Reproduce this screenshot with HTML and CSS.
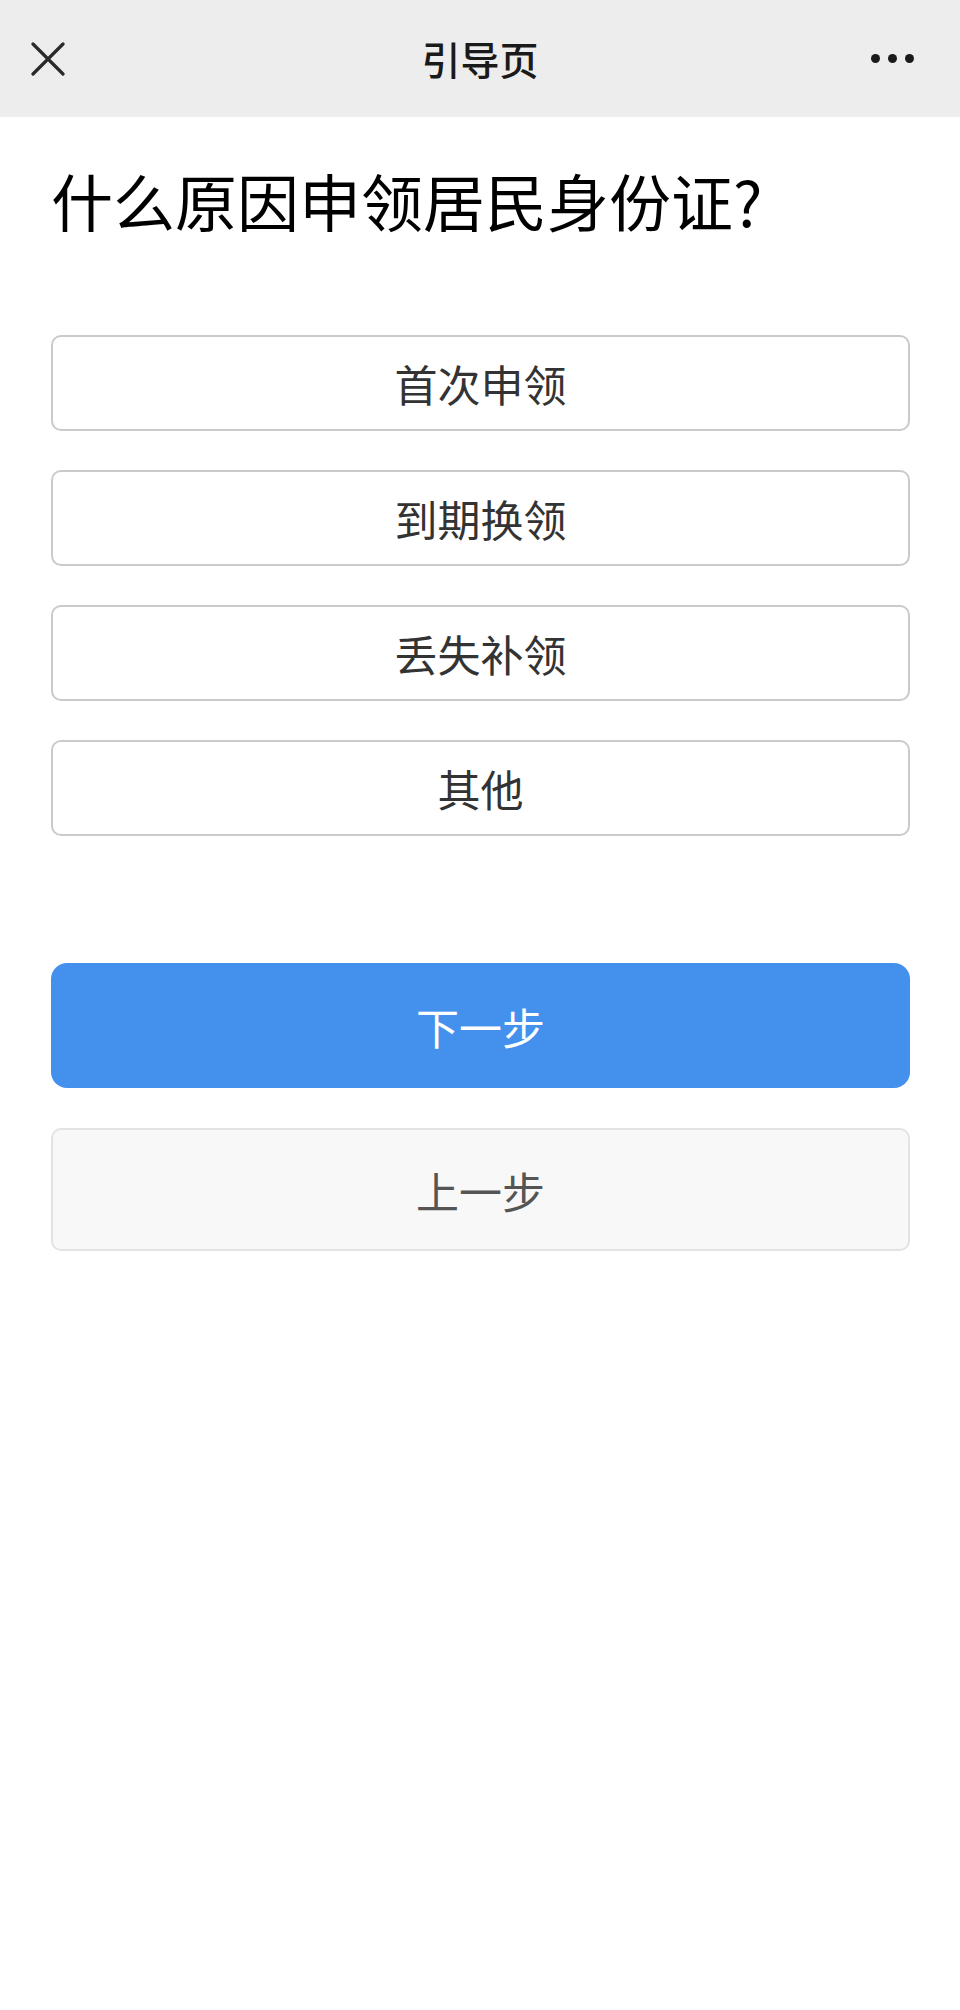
FILE: index.html
```html
<!DOCTYPE html>
<html lang="zh-CN">
<head>
    <meta charset="UTF-8">
    <meta name="viewport" content="width=device-width, initial-scale=1.0">
    <title>引导页</title>
    <link rel="stylesheet" href="styles.css">
</head>
<body>

<header class="topbar">
    <div class="topbar-left">
        <svg class="close-icon" width="34" height="34" viewBox="0 0 34 34">
            <path d="M2 2 L32 32 M32 2 L2 32" stroke="#2a2a2a" stroke-width="3.2" stroke-linecap="round" fill="none"/>
        </svg>
    </div>
    <h1 class="topbar-title">引导页</h1>
    <div class="topbar-right">
        <span class="dot"></span>
        <span class="dot"></span>
        <span class="dot"></span>
    </div>
</header>

<div class="container">
    <h2 class="question">什么原因申领居民身份证?</h2>

    <!-- 选项 -->
    <div class="options">
        <button type="button" class="option">首次申领</button>
        <button type="button" class="option">到期换领</button>
        <button type="button" class="option">丢失补领</button>
        <button type="button" class="option">其他</button>
    </div>

    <div class="actions">
        <button type="button" class="btn btn-next">下一步</button>
        <button type="button" class="btn btn-prev">上一步</button>
    </div>
</div>

</body>
</html>
```

FILE: styles.css
```css
body {
    margin: 0;
    font-family: "Noto Sans CJK SC", "Noto Sans", sans-serif;
    background: #fff;
    color: #000;
}
.topbar {
    height: 117px;
    background: #ededed;
    display: grid;
    grid-template-columns: 1fr auto 1fr;
    align-items: center;
    padding: 0 31px;
}
.topbar-left {
    display: flex;
    align-items: center;
}
.close-icon {
    display: block;
    margin-top: 1px;
}
.topbar-title {
    margin: 0;
    font-size: 39px;
    font-weight: 500;
    color: #1a1a1a;
    line-height: 1;
}
.topbar-right {
    display: flex;
    justify-content: flex-end;
    align-items: center;
    gap: 8px;
    padding-right: 15px;
}
.dot {
    width: 9px;
    height: 9px;
    border-radius: 50%;
    background: #1a1a1a;
}
.container {
    padding: 0 50px 0 51px;
}
.question {
    margin: 43px 0 0;
    font-size: 62px;
    font-weight: 400;
    line-height: 80px;
    color: #000;
}
.options {
    display: flex;
    flex-direction: column;
    gap: 39px;
    margin-top: 95px;
}
.option {
    box-sizing: border-box;
    height: 96px;
    width: 100%;
    background: #fff;
    border: 2px solid #cacaca;
    border-radius: 10px;
    font-family: inherit;
    font-size: 43px;
    color: #333;
    cursor: pointer;
}
.actions {
    display: flex;
    flex-direction: column;
    gap: 40px;
    margin-top: 127px;
}
.btn {
    box-sizing: border-box;
    width: 100%;
    font-family: inherit;
    font-size: 43px;
    cursor: pointer;
}
.btn-next {
    height: 125px;
    background: #4391ed;
    color: #fff;
    border: none;
    border-radius: 16px;
}
.btn-prev {
    height: 123px;
    background: #f8f8f8;
    color: #555;
    border: 2px solid #e3e3e3;
    border-radius: 10px;
}
```
